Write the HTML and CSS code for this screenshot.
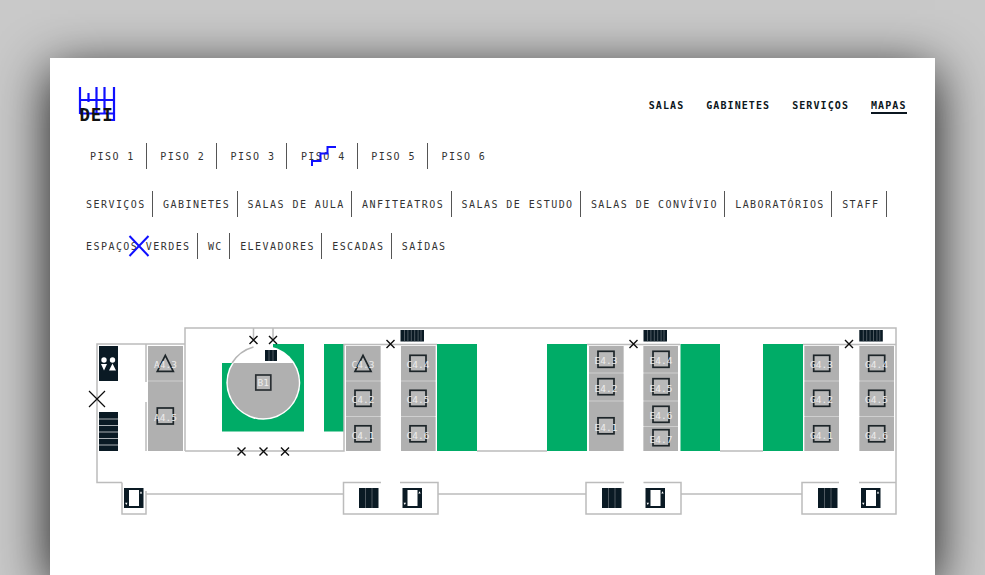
FILE: index.html
```html
<!DOCTYPE html>
<html lang="pt">
<head>
<meta charset="utf-8">
<title>DEI - Mapas</title>
<link rel="stylesheet" href="styles.css">
</head>
<body>
<main class="card">
  <header class="top">
    <svg class="logo" width="38" height="36" viewBox="78 86 38 36">
      <path class="logo-grid" d="M80 87V114M88.500 93V102M96.500 87V114M104.500 87V114M114 87V121M80 100H114M80 113.500H114M104 120H114"/>
      <text class="logo-text" x="79.500" y="121">DEI</text>
    </svg>
    <nav class="main-nav">
      <a>SALAS</a><a>GABINETES</a><a>SERVIÇOS</a><a class="active">MAPAS</a>
    </nav>
  </header>

  <ul class="floors">
    <li>PISO 1</li><li>PISO 2</li><li>PISO 3</li><li class="floor-current">PISO 4
      <svg class="mark-stairs" width="26" height="22" viewBox="0 0 26 22"><path d="M1 20V15H9.500V7.500H16.500V1H25"/></svg></li><li>PISO 5</li><li class="no-sep">PISO 6</li>
  </ul>

  <ul class="filters">
    <li>SERVIÇOS</li><li>GABINETES</li><li>SALAS DE AULA</li><li>ANFITEATROS</li><li>SALAS DE ESTUDO</li><li>SALAS DE CONVÍVIO</li><li>LABORATÓRIOS</li><li>STAFF</li>
  </ul>
  <ul class="filters">
    <li class="filter-green">ESPAÇOS VERDES
      <svg class="mark-x" width="22" height="22" viewBox="0 0 22 22"><path d="M1.500 21L20.500 1M1.500 1L20.500 21"/></svg></li><li>WC</li><li>ELEVADORES</li><li>ESCADAS</li><li class="no-sep">SAÍDAS</li>
  </ul>

  <svg class="map" width="820" height="200" viewBox="85 320 820 200">
    <defs>
      <g id="ico-lift">
        <rect class="dark" width="19.500" height="20"/>
        <rect class="white" x="5" y="2" width="10" height="16"/>
        <path class="white" d="M15.800 5.500L17 3.300L18.200 5.500ZM1.100 14.800H3.500L2.300 17Z"/>
      </g>
      <g id="ico-stair3">
        <rect class="dark" width="19.500" height="20"/>
        <path class="thin" d="M6.500 0V20M13 0V20"/>
      </g>
      <g id="ico-stair7">
        <rect class="dark" width="23.500" height="11.500"/>
        <path class="thin" d="M4 0V11.500M7.400 0V11.500M10.800 0V11.500M14.200 0V11.500M17.600 0V11.500M20.500 0V11.500"/>
      </g>
      <path id="ico-x" class="x" d="M-4 -4L4 4M-4 4L4 -4"/>
      <rect id="ico-sq" class="room-ico" x="-8" y="-8" width="16" height="16"/>
      <path id="ico-tri" class="room-ico" d="M0 -8L8 8H-8Z"/>
    </defs>

    <!-- green areas -->
    <rect class="green" x="222" y="363" width="82" height="68.500"/>
    <rect class="green" x="273" y="344" width="31" height="20"/>
    <rect class="green" x="324" y="344" width="20" height="87.500"/>
    <rect class="green" x="437" y="344" width="40" height="107"/>
    <rect class="green" x="547" y="344" width="40" height="107"/>
    <rect class="green" x="680.500" y="344" width="39.500" height="107"/>
    <rect class="green" x="763" y="344" width="40" height="107"/>

    <!-- walls -->
    <path class="wall" d="M122 482.500H97V344H185M185 451V328H896V514H802V482.500H839M859 482.500H896"/>
    <path class="wall" d="M146 344V382M146 402V451"/>
    <path class="wall" d="M185 451H344V344.500H437M477 451H547M587 344.500H680M720 451H763M803 344.500H896"/>
    <path class="wall" d="M253.500 328V340M273 328V340"/>
    <path class="wall" d="M122 482.500V514H146V491M146 494H343.500"/>
    <path class="wall" d="M381 482.500H343.500V514H438V482.500H400"/>
    <path class="wall" d="M438 494H586M624 482.500H586V514H681V482.500H643.500M681 494H802"/>

    <!-- atrium -->
    <circle class="atrium-white" cx="263.300" cy="382.700" r="37"/>
    <path class="atrium-gray" d="M233.800 363H292.800A35.500 35.500 0 1 1 233.800 363Z"/>
    <path class="wall-thin" d="M232 363A37 37 0 0 1 253.500 347"/>
    <rect x="265" y="350" width="12" height="11" class="dark"/>
    <path class="thin" d="M269 350V361M273 350V361"/>
    <rect class="b1-box" x="255.800" y="375" width="15" height="15"/>
    <text class="label" x="263.300" y="385.500">B1</text>

    <!-- rooms -->
    <g class="rooms">
      <rect x="99" y="346" width="19" height="35" class="dark"/>
      <rect x="99" y="412" width="19" height="39" class="dark"/>
      <path class="thin-strong" d="M99 419H118M99 425.500H118M99 432H118M99 438.500H118M99 445H118"/>
      <circle class="white" cx="104" cy="360" r="2.700"/>
      <circle class="white" cx="112.500" cy="360" r="2.700"/>
      <path class="white" d="M101 364H107L104 370.500ZM112.500 363.500L116 370.500H109Z"/>

      <rect x="148" y="346" width="35" height="105" class="room-gap"/>
      <rect x="346" y="346" width="34.500" height="105" class="room-gap"/>
      <rect x="401" y="346" width="34.500" height="105" class="room-gap"/>
      <rect x="589" y="346" width="34.500" height="105" class="room-gap"/>
      <rect x="643.500" y="346" width="34.500" height="105" class="room-gap"/>
      <rect x="804.500" y="346" width="34.500" height="105" class="room-gap"/>
      <rect x="859.500" y="346" width="34.500" height="105" class="room-gap"/>

      <rect x="148" y="346" width="35" height="34.500" class="room"/>
      <rect x="148" y="381.500" width="35" height="69.500" class="room"/>

      <rect x="346" y="346" width="34.500" height="34.500" class="room"/>
      <rect x="346" y="381.500" width="34.500" height="34.500" class="room"/>
      <rect x="346" y="417" width="34.500" height="34" class="room"/>
      <rect x="401" y="346" width="34.500" height="34.500" class="room"/>
      <rect x="401" y="381.500" width="34.500" height="34.500" class="room"/>
      <rect x="401" y="417" width="34.500" height="34" class="room"/>

      <rect x="589" y="346" width="34.500" height="26.500" class="room"/>
      <rect x="589" y="373.500" width="34.500" height="27" class="room"/>
      <rect x="589" y="401.500" width="34.500" height="49.500" class="room"/>
      <rect x="643.500" y="346" width="34.500" height="26.500" class="room"/>
      <rect x="643.500" y="373.500" width="34.500" height="27" class="room"/>
      <rect x="643.500" y="401.500" width="34.500" height="24.500" class="room"/>
      <rect x="643.500" y="427" width="34.500" height="24" class="room"/>

      <rect x="804.500" y="346" width="34.500" height="34.500" class="room"/>
      <rect x="804.500" y="381.500" width="34.500" height="34.500" class="room"/>
      <rect x="804.500" y="417" width="34.500" height="34" class="room"/>
      <rect x="859.500" y="346" width="34.500" height="34.500" class="room"/>
      <rect x="859.500" y="381.500" width="34.500" height="34.500" class="room"/>
      <rect x="859.500" y="417" width="34.500" height="34" class="room"/>
    </g>

    <!-- room icons -->
    <use href="#ico-tri" x="165.300" y="363.300"/>
    <use href="#ico-sq" x="165.300" y="416"/>
    <use href="#ico-tri" x="363" y="363.300"/>
    <use href="#ico-sq" x="363" y="398.300"/>
    <use href="#ico-sq" x="363" y="433.800"/>
    <use href="#ico-sq" x="418" y="363.300"/>
    <use href="#ico-sq" x="418" y="398.300"/>
    <use href="#ico-sq" x="418" y="433.800"/>
    <use href="#ico-sq" x="606" y="359.300"/>
    <use href="#ico-sq" x="606" y="386.700"/>
    <use href="#ico-sq" x="606" y="425.800"/>
    <use href="#ico-sq" x="661" y="359.300"/>
    <use href="#ico-sq" x="661" y="386.700"/>
    <use href="#ico-sq" x="661" y="414.300"/>
    <use href="#ico-sq" x="661" y="437.700"/>
    <use href="#ico-sq" x="821.700" y="363.300"/>
    <use href="#ico-sq" x="821.700" y="398.300"/>
    <use href="#ico-sq" x="821.700" y="433.800"/>
    <use href="#ico-sq" x="876.700" y="363.300"/>
    <use href="#ico-sq" x="876.700" y="398.300"/>
    <use href="#ico-sq" x="876.700" y="433.800"/>

    <!-- room labels -->
    <text class="label" x="165.500" y="368">A4.3</text>
    <text class="label" x="165.500" y="420.500">A4.5</text>
    <text class="label" x="363" y="368">C4.3</text>
    <text class="label" x="363" y="403">C4.2</text>
    <text class="label" x="363" y="438.500">C4.1</text>
    <text class="label" x="418" y="368">C4.4</text>
    <text class="label" x="418" y="403">C4.5</text>
    <text class="label" x="418" y="438.500">C4.6</text>
    <text class="label" x="606" y="364">E4.3</text>
    <text class="label" x="606" y="391.500">E4.2</text>
    <text class="label" x="606" y="430.500">E4.1</text>
    <text class="label" x="661" y="364">E4.4</text>
    <text class="label" x="661" y="391.500">E4.5</text>
    <text class="label" x="661" y="419">E4.6</text>
    <text class="label" x="661" y="442.500">E4.7</text>
    <text class="label" x="821.500" y="368">G4.3</text>
    <text class="label" x="821.500" y="403">G4.2</text>
    <text class="label" x="821.500" y="438.500">G4.1</text>
    <text class="label" x="876.500" y="368">G4.4</text>
    <text class="label" x="876.500" y="403">G4.5</text>
    <text class="label" x="876.500" y="438.500">G4.6</text>

    <!-- exits -->
    <use href="#ico-x" x="253.500" y="340"/>
    <use href="#ico-x" x="273" y="340"/>
    <use href="#ico-x" x="241.500" y="451.500"/>
    <use href="#ico-x" x="263.500" y="451.500"/>
    <use href="#ico-x" x="285" y="451.500"/>
    <use href="#ico-x" x="390.500" y="344"/>
    <use href="#ico-x" x="633.500" y="344"/>
    <use href="#ico-x" x="849" y="344"/>
    <path class="x-big" d="M89 391L105 407M89 407L105 391"/>

    <!-- stairs and lifts -->
    <use href="#ico-stair7" x="400.500" y="330"/>
    <use href="#ico-stair7" x="643.500" y="330"/>
    <use href="#ico-stair7" x="859.300" y="330"/>
    <use href="#ico-lift" x="124" y="488"/>
    <use href="#ico-stair3" x="359" y="488"/>
    <use href="#ico-lift" x="402.500" y="488"/>
    <use href="#ico-stair3" x="602" y="488"/>
    <use href="#ico-lift" x="645.500" y="488"/>
    <use href="#ico-stair3" x="818" y="488"/>
    <use href="#ico-lift" x="861" y="488"/>
  </svg>
</main>
</body>
</html>
```
FILE: styles.css
```css
* { box-sizing: border-box; }

html, body {
  margin: 0;
  height: 100%;
}

body {
  background: #c9c9c9;
  overflow: hidden;
  padding: 58px 50px 0;
  font-family: "DejaVu Sans Mono", monospace;
}

.card {
  background: #fff;
  width: 885px;
  height: 517px;
  box-shadow: 0 13px 50px rgba(0, 0, 0, 0.9);
  padding: 28px 28.500px 0 28px;
}

.top {
  display: flex;
  justify-content: space-between;
  align-items: flex-start;
  height: 37px;
}

.logo { display: block; overflow: visible; }
.logo-grid { fill: none; stroke: #1010ff; stroke-width: 2.200; }
.logo-text {
  font: 700 17.500px "DejaVu Sans Mono", monospace;
  letter-spacing: 0.800px;
  fill: #111;
}

.main-nav {
  display: flex;
  gap: 22px;
  padding: 14px 0 0;
}

.main-nav a {
  font-size: 10px;
  font-weight: 700;
  letter-spacing: 1.080px;
  line-height: 12px;
  color: #0b1620;
  height: 13px;
}

.main-nav a.active {
  height: 11.500px;
  border-bottom: 2px solid #0b1620;
  box-sizing: content-box;
}

ul { list-style: none; margin: 0; padding: 0; display: flex; }

.floors {
  margin: 20px 0 0 -1.500px;
}

.floors li,
.filters li {
  position: relative;
  font-size: 10px;
  letter-spacing: 1.450px;
  line-height: 28px;
  height: 26px;
  color: #333;
  border-right: 1px solid #555;
  white-space: nowrap;
}

.floors li {
  padding: 0 0 0 13.500px;
  width: 70.300px;
}

.filters {
  margin-top: 15.500px;
  margin-left: -2px;
}

.floors + .filters { margin-top: 22px; }

.filters li { padding: 0 6.300px 0 10px; }

.floors li.no-sep,
.filters li.no-sep { border-right: 0; }

.mark-stairs,
.mark-x {
  position: absolute;
  fill: none;
  stroke: #1010ff;
  stroke-width: 2;
}

.mark-stairs { left: 24px; top: 3px; }
.mark-x { left: 52px; top: 2px; }

.map {
  display: block;
  margin: 61.500px 0 0 7px;
  overflow: visible;
}

.green { fill: #00ac67; }
.wall { fill: none; stroke: #bcbcbc; stroke-width: 1.500; }
.wall-thin { fill: none; stroke: #b5b5b5; stroke-width: 1.500; }
.dark { fill: #0a1a24; }
.white { fill: #fff; }
.thin { stroke: #6d767c; stroke-width: 0.700; fill: none; }
.thin-strong { stroke: #a9aeb2; stroke-width: 1; fill: none; }
.room { fill: #b0b0b0; }
.room-gap { fill: #cfcfcf; }
.room-ico { fill: #b9b9b9; stroke: #1d2529; stroke-width: 1.700; }
.b1-box { fill: #b9b9b9; stroke: #2a2f33; stroke-width: 1.700; }
.atrium-white { fill: #fff; }
.atrium-gray { fill: #b0b0b0; }

.label {
  font: 9.500px "DejaVu Sans Mono", monospace;
  fill: #ececec;
  text-anchor: middle;
}

.x { fill: none; stroke: #0c0c0c; stroke-width: 1.400; }
.x-big { fill: none; stroke: #0c0c0c; stroke-width: 1.200; }
```
